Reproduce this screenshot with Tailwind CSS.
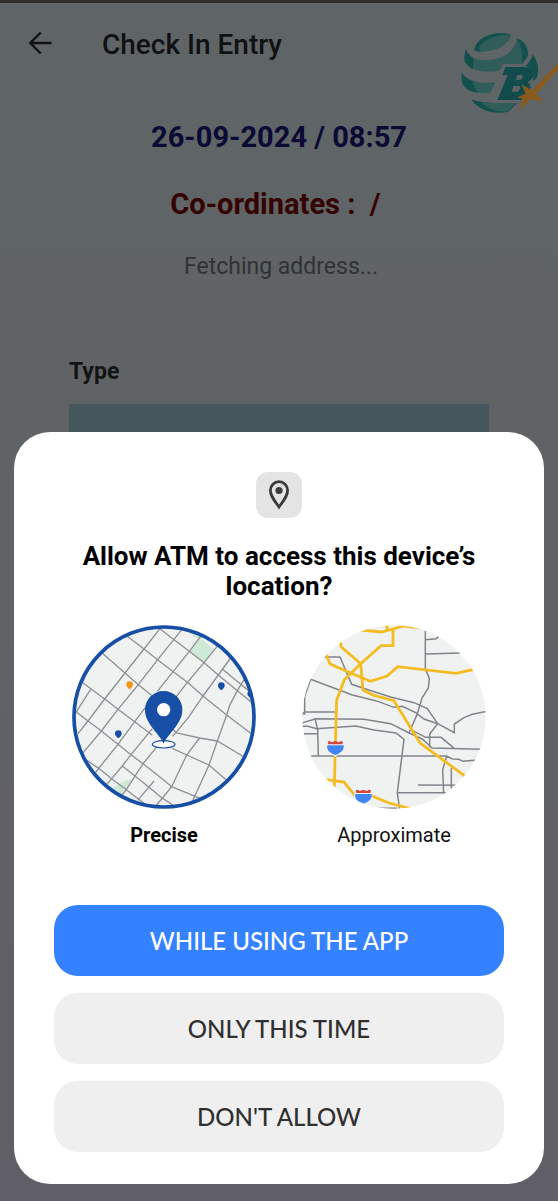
<!DOCTYPE html>
<html lang="en">
<head>
<meta charset="utf-8">
<meta name="viewport" content="width=device-width, initial-scale=1">
<title>Check In Entry</title>
<script src="https://cdn.jsdelivr.net/npm/@tailwindcss/browser@4"></script>
</head>
<body class="relative min-h-screen overflow-x-hidden border-t-[3px] border-[#2f2f30] bg-linear-to-b from-[#5f6566] via-[#606266] to-[#605e66] font-['Roboto',sans-serif]">

<div>
  <header class="flex h-[107px] items-start">
    <button type="button" aria-label="Back" class="mt-6 ml-6 flex size-8 items-center justify-center text-[#101112]">
      <svg class="size-6" viewBox="0 0 24 24" fill="none" stroke="currentColor" stroke-width="2.4"><path d="M23.500 12H2M12.800 1.500L2.300 12l10.500 10.500"/></svg>
    </button>
    <h1 class="mt-5 ml-[46px] flex-1 text-[28px] leading-[44px] font-medium text-[#101112]">Check In Entry</h1>
    <svg class="mt-[7px] h-[120px] w-[118px]" viewBox="0 0 354 360" role="img" aria-label="BX logo">
      <path fill="#305c59" d="M103 121C105 91 145 70 181 70C195 70 207 72 214 75C205 100 180 117 148 123C130 126 112 126 103 121Z"/>
      <path fill="#11504c" d="M103 121C105 91 145 70 181 70C195 70 207 72 214 75C180 72 140 84 121 106C116 114 118 121 124 125C115 125 108 124 103 121Z"/>
      <path fill="#305c59" d="M78 117C83 141 110 154 147 150C197 145 225 121 231 85C254 98 265 120 261 143L248 162H190L178 183C138 190 90 181 73 156Z"/>
      <path fill="#11504c" d="M78 117C83 130 90 139 101 145L98 177C79 166 71 149 73 139ZM231 85C253 93 268 116 263 139L246 158C250 129 243 108 231 85Z"/>
      <path fill="#305c59" d="M65 188C80 211 115 222 166 217L150 249C103 252 70 238 65 217Z"/>
      <path fill="#11504c" d="M65 188C74 202 86 210 98 214C101 228 106 238 115 249C79 244 61 225 65 188ZM277 133C294 151 299 181 290 205L278 214C284 190 275 175 257 168C268 157 276 147 277 133ZM93 267C112 275 138 279 172 279H232L205 305C161 315 116 301 93 267Z"/>
      <path fill="#305c59" d="M122 277C138 279 154 279 172 279H230L204 303C170 309 144 297 122 277Z"/>
      <path fill="#114b4c" fill-rule="evenodd" d="M196 171H250C286 171 290 203 262 217C281 227 268 250 250 262L243 270H172L203 196H187ZM232 195L227 209H239C249 209 253 195 243 195ZM221 228L214 245H228C239 245 245 228 235 228Z"/>
      <path fill="#8a5a1c" d="M354 160V178L288 251L309 275L273 267L234 304L251 267L231 262L257 251L244 223L276 241C305 213 330 184 354 160Z"/>
    </svg>
  </header>

  <main class="px-[69px] text-center">
    <p class="mt-[9px] text-[29px] leading-[36px] font-bold text-[#0b0a35]">26-09-2024 / 08:57</p>
    <p class="mt-[31px] text-[29px] leading-[36px] font-bold whitespace-pre text-[#350204]">Co-ordinates :  / </p>
    <p class="mt-7 ml-1 text-[23px] leading-[34px] text-[#303233]">Fetching address...</p>
    <label for="type" class="mt-[71px] block text-left text-[23px] leading-[34px] font-bold text-[#131414]">Type</label>
    <select id="type" class="mt-[15px] block h-[70px] w-full appearance-none bg-[#46565d]"><option></option></select>
  </main>
</div>

<section role="dialog" aria-modal="true" aria-labelledby="ask" class="absolute inset-x-[14px] top-[429px] rounded-[36px] bg-white px-10 pt-10 pb-8">
  <div class="mx-auto flex size-[46px] items-center justify-center rounded-xl bg-[#e4e4e4] text-[#3b3b3b]">
    <svg class="size-8" viewBox="0 0 32 32"><path fill="none" stroke="currentColor" stroke-width="2.800" d="M16 28C11 21 7.400 17 7.400 11.300A8.600 8.600 0 0 1 24.600 11.300C24.600 17 21 21 16 28Z"/><circle cx="16" cy="11.500" r="3.600" fill="currentColor"/></svg>
  </div>
  <h2 id="ask" class="mx-auto mt-[23px] max-w-[420px] text-center text-[26px] leading-[30px] font-bold text-black">Allow ATM to access this device’s location?</h2>

  <div class="mt-[17px] flex justify-center gap-[30px]">
    <label class="flex w-[200px] cursor-pointer flex-col items-center">
      <input type="radio" name="accuracy" class="sr-only" checked>
      <svg class="size-[200px]" viewBox="0 0 600 600" aria-hidden="true">
        <defs><clipPath id="disc"><circle cx="300" cy="297" r="275"/></clipPath></defs>
        <g clip-path="url(#disc)">
          <rect width="600" height="600" fill="#f0f2f2"/>
          <path fill="#ceead6" d="M360 34L404 53L450 95L420 134L376 100L404 65ZM208 486H187L160 500L135 525L170 532L182 514Z"/>
          <g fill="none" stroke="#8d9095" stroke-width="4">
            <path d="M180 47L240 93L300 140L370 193L417 234L488 291L570 353"/>
            <path d="M110 101L183 165L223 200L270 238"/>
            <path d="M45 186L122 243L162 274L212 311L265 352"/>
            <path d="M32 278L72 309L112 339L162 379L201 410L237 437L300 487L323 506L410 542"/>
            <path d="M60 421L104 451L143 482L187 515L240 556"/>
            <path d="M175 444L225 484L257 509L293 539L335 567"/>
            <path d="M285 30L330 65L376 100L420 134L463 171L520 218L570 259"/>
            <path d="M475 153L570 232"/>
            <path d="M290 29L240 93L183 165L122 243L72 309L42 347"/>
            <path d="M358 29L281 125L223 200L162 274L112 339L55 407"/>
            <path d="M412 52L376 100L328 160L280 220"/>
            <path d="M262 245L212 311L162 379L104 451L90 470"/>
            <path d="M466 77L420 134L370 193L330 245"/>
            <path d="M265 332L201 410L175 444L126 502"/>
            <path d="M504 114L463 171L417 234L375 296L338 341L325 355"/>
            <path d="M292 370L237 437L187 515L167 540"/>
            <path d="M545 177L520 218L497 262L488 291L460 369L435 441L383 555"/>
            <path d="M325 333L338 345L407 360L460 369L545 420"/>
            <path d="M325 391L368 411L435 441L493 491"/>
            <path d="M407 360L368 411L323 506L273 567"/>
            <path d="M270 489L221 547M80 214L34 286"/>
          </g>
          <path fill="#174ea6" d="M472 217C466 211 462 209 462 203A10 10 0 0 1 482 203C482 209 478 211 472 217ZM163 361C157 355 153 353 153 347A10 10 0 0 1 173 347C173 353 169 355 163 361ZM561 242C555 236 550 234 550 228A10 10 0 0 1 570 228Z"/>
          <path fill="#ee9714" d="M197 214C191 208 187 206 187 200A10 10 0 0 1 207 200C207 206 203 208 197 214Z"/>
        </g>
        <circle cx="300" cy="297" r="270" fill="none" stroke="#174ea6" stroke-width="11"/>
        <ellipse cx="299" cy="379" rx="34" ry="11" fill="#fff" stroke="#174ea6" stroke-width="3.500"/>
        <path fill="#174ea6" d="M299 377C288 348 243 318 243 275A56 56 0 0 1 355 275C355 318 310 348 299 377Z"/>
        <circle cx="299" cy="275" r="20" fill="#fff"/>
      </svg>
      <span class="mt-1 text-[20px] leading-[26px] font-bold text-black">Precise</span>
    </label>

    <label class="flex w-[200px] cursor-pointer flex-col items-center">
      <input type="radio" name="accuracy" class="sr-only">
      <svg class="size-[200px]" viewBox="0 0 600 600" aria-hidden="true">
        <g clip-path="url(#disc)">
          <rect width="600" height="600" fill="#f0f2f2"/>
          <g fill="none" stroke="#80848a" stroke-width="4.500">
            <path d="M394 20V153L406 181L403 210L384 240L369 290L345 345"/>
            <path d="M394 65L427 62L440 50M394 108L498 105"/>
            <path d="M80 117H138L152 150L173 199L215 213L290 237L360 254L400 272L431 317L407 348V388"/>
            <path d="M32 290V235L50 184L175 231L245 248L300 268L325 265L365 284L390 303L431 317L481 344V318L510 299L535 289L580 280"/>
            <path d="M20 294L32 282H125M20 316L65 302L210 304L290 317L345 345L385 363L414 390L560 394"/>
            <path d="M20 325H42L68 332L185 324L240 336L306 345L330 364L310 524L317 575"/>
            <path d="M63 302L71 335L73 414M20 347H71M350 335L395 358H441L481 391"/>
            <path d="M45 414H458L475 423L495 424L507 430L550 426M458 414L446 455L449 527M472 450V512M372 501L485 502M310 524H457M240 571H310"/>
          </g>
          <g fill="none" stroke="#f3bd22" stroke-width="8.500">
            <path d="M200 36L262 42L330 24L385 30L440 42M279 15V36M297 32V83H261L200 137L151 185L128 247L124 385L121 507"/>
            <path d="M138 66L142 87L200 137L207 216L239 232L300 248L378 375L515 476"/>
            <path d="M95 105L108 138L170 165L229 190L279 174L311 146L486 166L545 153"/>
            <path d="M90 484L150 492L183 533H232L285 555L350 572"/>
          </g>
          <g id="shield">
            <path fill="#f0f2f2" d="M97 373H151V395L124 416L97 395Z"/>
            <path fill="#d5473d" d="M101 371L107 369L113 373L124 369L135 373L141 369L147 371L145 379H103Z"/>
            <path fill="#4285f4" d="M100 382H149C151 397 141 405 124 411C107 405 97 397 100 382Z"/>
          </g>
          <use href="#shield" x="84" y="146"/>
        </g>
      </svg>
      <span class="mt-1 text-[20px] leading-[26px] text-[#111]">Approximate</span>
    </label>
  </div>

  <div class="mt-[57px] flex flex-col gap-[17px] font-['Lato',sans-serif] text-[24px] font-medium text-[#303030]">
    <button type="button" class="h-[71px] rounded-[24px] bg-[#3482ff] text-white">WHILE USING THE APP</button>
    <button type="button" class="h-[71px] rounded-[24px] bg-[#efefef]">ONLY THIS TIME</button>
    <button type="button" class="h-[71px] rounded-[24px] bg-[#efefef]">DON'T ALLOW</button>
  </div>
</section>
</body>
</html>
